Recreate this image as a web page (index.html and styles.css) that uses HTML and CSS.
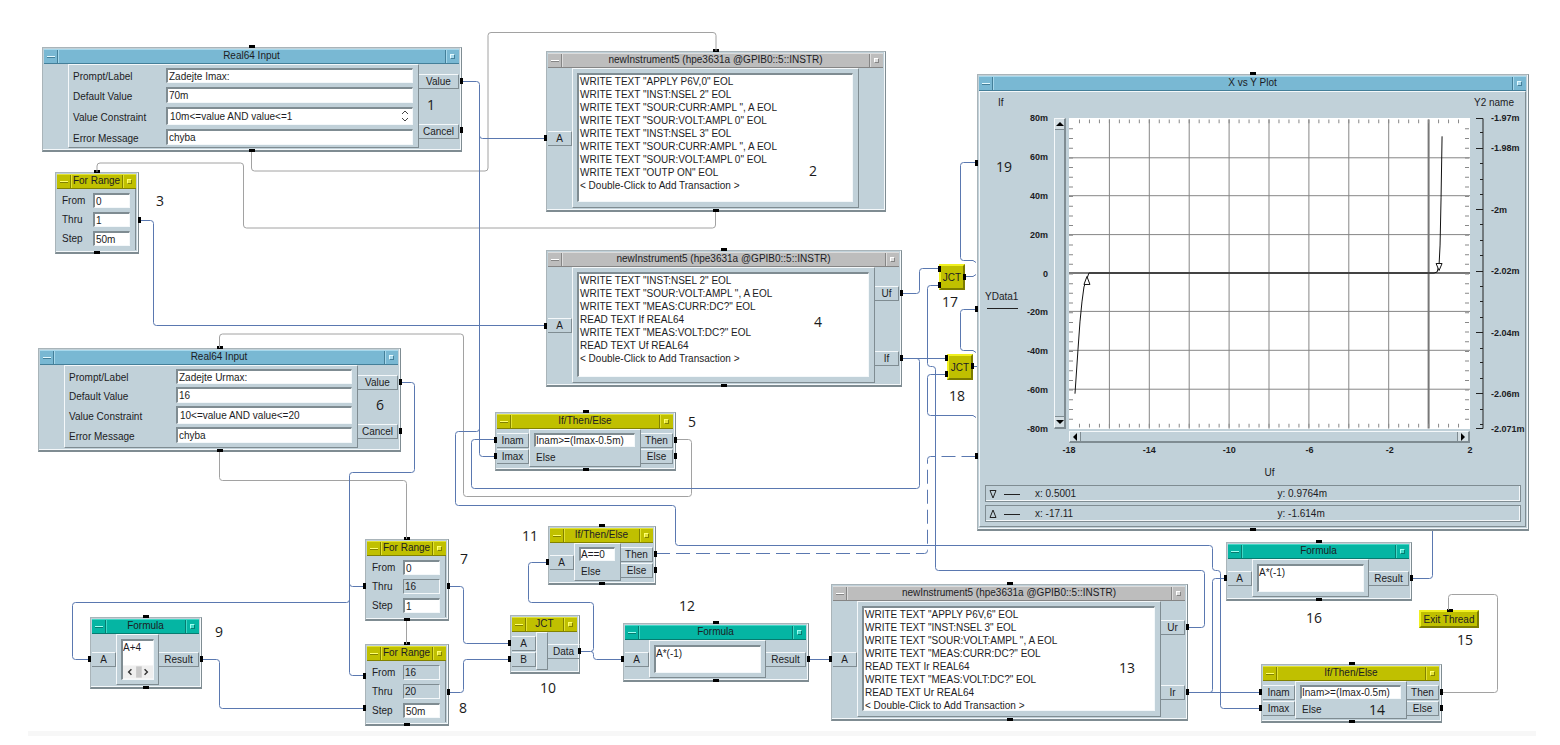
FILE: index.html
```html
<!DOCTYPE html>
<html lang="cs">
<head>
<meta charset="utf-8">
<title>VEE program</title>
<link rel="stylesheet" href="styles.css">
</head>
<body>
<main class="canvas">

<section class="node blue pins node-imax">
  <header class="title"><button class="min" aria-label="Minimize"></button><span>Real64 Input</span><button class="max" aria-label="Maximize"></button></header>
  <div class="body">
    <div class="strip narrow"></div>
    <div class="panel fields">
      <label for="i1">Prompt/Label</label><input id="i1" value="Zadejte Imax:">
      <label for="i2">Default Value</label><input id="i2" value="70m">
      <label for="i3">Value Constraint</label>
      <div class="spin"><input id="i3" value="10m&lt;=value AND value&lt;=1"><svg viewBox="0 0 10 14"><path d="M2 5l3-3 3 3M2 9l3 3 3-3"/></svg></div>
      <label for="i4">Error Message</label><input id="i4" value="chyba">
    </div>
    <div class="strip wide spread"><span class="term">Value</span><span class="term">Cancel</span></div>
  </div>
</section>

<section class="node gray pins node-setup">
  <header class="title"><button class="min" aria-label="Minimize"></button><span>newInstrument5 (hpe3631a @GPIB0::5::INSTR)</span><button class="max" aria-label="Maximize"></button></header>
  <div class="body">
    <div class="strip narrow"><span class="term">A</span></div>
    <div class="panel"><ul class="list">
      <li>WRITE TEXT "APPLY P6V,0" EOL</li><li>WRITE TEXT "INST:NSEL 2" EOL</li><li>WRITE TEXT "SOUR:CURR:AMPL ", A EOL</li><li>WRITE TEXT "SOUR:VOLT:AMPL 0" EOL</li><li>WRITE TEXT "INST:NSEL 3" EOL</li><li>WRITE TEXT "SOUR:CURR:AMPL ", A EOL</li><li>WRITE TEXT "SOUR:VOLT:AMPL 0" EOL</li><li>WRITE TEXT "OUTP ON" EOL</li><li>&lt; Double-Click to Add Transaction &gt;</li>
    </ul></div>
    <div class="strip narrow"></div>
  </div>
</section>

<section class="node yellow pins node-range-a">
  <header class="title"><button class="min" aria-label="Minimize"></button><span>For Range</span><button class="max" aria-label="Maximize"></button></header>
  <div class="range">
    <label for="a1">From</label><input id="a1" value="0">
    <label for="a2">Thru</label><input id="a2" value="1">
    <label for="a3">Step</label><input id="a3" value="50m">
  </div>
</section>

<section class="node gray pins node-forward">
  <header class="title"><button class="min" aria-label="Minimize"></button><span>newInstrument5 (hpe3631a @GPIB0::5::INSTR)</span><button class="max" aria-label="Maximize"></button></header>
  <div class="body">
    <div class="strip narrow"><span class="term">A</span></div>
    <div class="panel"><ul class="list">
      <li>WRITE TEXT "INST:NSEL 2" EOL</li><li>WRITE TEXT "SOUR:VOLT:AMPL ", A EOL</li><li>WRITE TEXT "MEAS:CURR:DC?" EOL</li><li>READ TEXT If REAL64</li><li>WRITE TEXT "MEAS:VOLT:DC?" EOL</li><li>READ TEXT Uf REAL64</li><li>&lt; Double-Click to Add Transaction &gt;</li>
    </ul></div>
    <div class="strip narrow spread"><span class="term">Uf</span><span class="term">If</span></div>
  </div>
</section>

<section class="node yellow pins node-if-forward">
  <header class="title"><button class="min" aria-label="Minimize"></button><span>If/Then/Else</span><button class="max" aria-label="Maximize"></button></header>
  <div class="body">
    <div class="strip mid"><span class="term">Inam</span><span class="term">Imax</span></div>
    <div class="panel cond"><input aria-label="Condition" value="Inam&gt;=(Imax-0.5m)"><span>Else</span></div>
    <div class="strip mid"><span class="term">Then</span><span class="term">Else</span></div>
  </div>
</section>

<section class="node blue pins node-urmax">
  <header class="title"><button class="min" aria-label="Minimize"></button><span>Real64 Input</span><button class="max" aria-label="Maximize"></button></header>
  <div class="body">
    <div class="strip narrow"></div>
    <div class="panel fields">
      <label for="u1">Prompt/Label</label><input id="u1" value="Zadejte Urmax:">
      <label for="u2">Default Value</label><input id="u2" value="16">
      <label for="u3">Value Constraint</label>
      <div class="spin"><input id="u3" value="10&lt;=value AND value&lt;=20"></div>
      <label for="u4">Error Message</label><input id="u4" value="chyba">
    </div>
    <div class="strip wide spread"><span class="term">Value</span><span class="term">Cancel</span></div>
  </div>
</section>

<section class="node yellow pins node-range-b">
  <header class="title"><button class="min" aria-label="Minimize"></button><span>For Range</span><button class="max" aria-label="Maximize"></button></header>
  <div class="range">
    <label for="b1">From</label><input id="b1" value="0">
    <label for="b2">Thru</label><input id="b2" value="16" readonly>
    <label for="b3">Step</label><input id="b3" value="1">
  </div>
</section>

<section class="node yellow pins node-range-c">
  <header class="title"><button class="min" aria-label="Minimize"></button><span>For Range</span><button class="max" aria-label="Maximize"></button></header>
  <div class="range">
    <label for="c1">From</label><input id="c1" value="16" readonly>
    <label for="c2">Thru</label><input id="c2" value="20" readonly>
    <label for="c3">Step</label><input id="c3" value="50m">
  </div>
</section>

<section class="node green pins node-plus">
  <header class="title"><button class="min" aria-label="Minimize"></button><span>Formula</span><button class="max" aria-label="Maximize"></button></header>
  <div class="body">
    <div class="strip narrow"><span class="term">A</span></div>
    <div class="panel formula"><div class="editor"><textarea aria-label="Formula">A+4</textarea>
      <svg class="hbar" viewBox="0 0 32 14"><path class="track" d="M0 0h32v14h-32z"/><path class="thumb" d="M14 1h6v12h-6z"/><path class="chev" d="M9 4l-3 3 3 3M23 4l3 3-3 3"/></svg></div></div>
    <div class="strip wide"><span class="term">Result</span></div>
  </div>
</section>

<section class="node yellow node-jct">
  <header class="title"><button class="min" aria-label="Minimize"></button><span>JCT</span><button class="max" aria-label="Maximize"></button></header>
  <div class="body">
    <div class="strip narrow"><span class="term">A</span><span class="term">B</span></div>
    <div class="panel"></div>
    <div class="strip mid"><span class="term">Data</span></div>
  </div>
</section>

<section class="node yellow pins node-if-zero">
  <header class="title"><button class="min" aria-label="Minimize"></button><span>If/Then/Else</span><button class="max" aria-label="Maximize"></button></header>
  <div class="body">
    <div class="strip narrow"><span class="term">A</span></div>
    <div class="panel cond"><input aria-label="Condition" value="A==0"><span>Else</span></div>
    <div class="strip mid"><span class="term">Then</span><span class="term">Else</span></div>
  </div>
</section>

<section class="node green pins node-neg-a">
  <header class="title"><button class="min" aria-label="Minimize"></button><span>Formula</span><button class="max" aria-label="Maximize"></button></header>
  <div class="body">
    <div class="strip narrow"><span class="term">A</span></div>
    <div class="panel formula"><div class="editor"><textarea aria-label="Formula">A*(-1)</textarea></div></div>
    <div class="strip wide"><span class="term">Result</span></div>
  </div>
</section>

<section class="node gray pins node-reverse">
  <header class="title"><button class="min" aria-label="Minimize"></button><span>newInstrument5 (hpe3631a @GPIB0::5::INSTR)</span><button class="max" aria-label="Maximize"></button></header>
  <div class="body">
    <div class="strip narrow"><span class="term">A</span></div>
    <div class="panel"><ul class="list">
      <li>WRITE TEXT "APPLY P6V,6" EOL</li><li>WRITE TEXT "INST:NSEL 3" EOL</li><li>WRITE TEXT "SOUR:VOLT:AMPL ", A EOL</li><li>WRITE TEXT "MEAS:CURR:DC?" EOL</li><li>READ TEXT Ir REAL64</li><li>WRITE TEXT "MEAS:VOLT:DC?" EOL</li><li>READ TEXT Ur REAL64</li><li>&lt; Double-Click to Add Transaction &gt;</li>
    </ul></div>
    <div class="strip narrow spread"><span class="term">Ur</span><span class="term">Ir</span></div>
  </div>
</section>

<section class="node green pins node-neg-b">
  <header class="title"><button class="min" aria-label="Minimize"></button><span>Formula</span><button class="max" aria-label="Maximize"></button></header>
  <div class="body">
    <div class="strip narrow"><span class="term">A</span></div>
    <div class="panel formula"><div class="editor"><textarea aria-label="Formula">A*(-1)</textarea></div></div>
    <div class="strip wide"><span class="term">Result</span></div>
  </div>
</section>

<section class="node yellow pins node-if-reverse">
  <header class="title"><button class="min" aria-label="Minimize"></button><span>If/Then/Else</span><button class="max" aria-label="Maximize"></button></header>
  <div class="body">
    <div class="strip mid"><span class="term">Inam</span><span class="term">Imax</span></div>
    <div class="panel cond"><input aria-label="Condition" value="Inam&gt;=(Imax-0.5m)"><span>Else</span></div>
    <div class="strip mid"><span class="term">Then</span><span class="term">Else</span></div>
  </div>
</section>

<button class="chip chip-exit">Exit Thread</button>
<button class="chip chip-a">JCT</button>
<button class="chip chip-b">JCT</button>

<section class="node blue pins node-plot">
  <header class="title"><button class="min" aria-label="Minimize"></button><span>X vs Y Plot</span><button class="max" aria-label="Maximize"></button></header>
  <div class="plot">
    <div class="names"><span>If</span><span>Y2 name</span></div>
    <div class="chart">
      <div class="trace"><span>YData1</span><i></i></div>
      <div class="ylabels"><span>80m</span><span>60m</span><span>40m</span><span>20m</span><span>0</span><span>-20m</span><span>-40m</span><span>-60m</span><span>-80m</span></div>
      <div class="vscroll"><button aria-label="Up"><svg viewBox="0 0 8 8"><path d="M0 6l4-4 4 4z"/></svg></button><button aria-label="Down"><svg viewBox="0 0 8 8"><path d="M0 2l4 4 4-4z"/></svg></button></div>
      <svg class="graph" viewBox="0 0 402 311">
        <path class="grid" d="M40.500 1v310M80.500 1v310M120.500 1v310M160.500 1v310M200.500 1v310M240.500 1v310M280.500 1v310M320.500 1v310M0 39.500h402M0 77.500h402M0 116.500h402M0 193.500h402M0 232.500h402M0 271.500h402"/>
        <path class="axis" d="M360.500 1v310M0 155h402"/>
        <path class="ticks-x" d="M10 3h390M10 308h390"/>
        <path class="ticks-y" d="M2 10v300M399 10v300"/>
        <path class="curve" d="M374 18L373 79 372 127 371 147 369 154 366 155H20L15 169 13 184 11 204 9 232 6 276"/>
        <path class="mark" d="M368 145.500h6l-3 7zM15 166.500h6l-3-8z"/>
      </svg>
      <svg class="y2" viewBox="0 0 56 311">
        <path d="M6 .5h7v310h-7M6 30.500h7M6 91.500h7M6 153.500h7M6 214.500h7M6 275.500h7M10 14.500h3M10 45.500h3M10 61.500h3M10 76.500h3M10 106.500h3M10 122.500h3M10 137.500h3M10 168.500h3M10 183.500h3M10 199.500h3M10 230.500h3M10 244.500h3M10 260.500h3M10 291.500h3M10 306.500h3"/>
        <text x="21" y="3">-1.97m</text><text x="21" y="33">-1.98m</text><text x="21" y="95">-2m</text><text x="21" y="156">-2.02m</text><text x="21" y="218">-2.04m</text><text x="21" y="279">-2.06m</text><text x="21" y="314">-2.071m</text>
      </svg>
      <div class="hscroll"><button aria-label="Left"><svg viewBox="0 0 8 8"><path d="M6 0L2 4l4 4z"/></svg></button><button aria-label="Right"><svg viewBox="0 0 8 8"><path d="M2 0l4 4-4 4z"/></svg></button></div>
      <div class="xlabels"><span>-18</span><span>-14</span><span>-10</span><span>-6</span><span>-2</span><span>2</span></div>
      <div class="xname">Uf</div>
    </div>
    <div class="markers">
      <div class="marker"><svg viewBox="0 0 32 10"><path d="M1 1.500h6L4 9zM15 5.500h16"/></svg><span>x: 0.5001</span><span>y: 0.9764m</span></div>
      <div class="marker"><svg viewBox="0 0 32 10"><path d="M1 8.500h6L4 1zM15 5.500h16"/></svg><span>x: -17.11</span><span>y: -1.614m</span></div>
    </div>
  </div>
</section>

<svg class="wires">
  <g class="seq">
    <path d="M251.500 152v16q0 3 3 3H485q3 0 3-3V35.500q0-3 3-3H713q3 0 3 3V51"/>
    <path d="M715.500 212v13q0 3-3 3H246.500q-3 0-3-3V166q0-3-3-3H100q-3 0-3 3v6"/>
    <path d="M219.500 348v-11q0-3 3-3H460.500q3 0 3 3V493.500q0 3 3 3H688.500q3 0 3-3V442.500q0-3-3-3H676"/>
    <path d="M219.500 452v25.500q0 3 3 3H403.500q3 0 3 3V539M406.500 621v23"/>
    <path d="M1442 692.500H1494.500q3 0 3-3V597.500q0-3-3-3H1451.500q-3 0-3 3V610"/>
  </g>
  <g class="data">
    <path d="M462 81.500H476.500q3 0 3 3V453.500q0 3 3 3H495M479.500 135.500q0 3 3 3H546"/>
    <path d="M479.500 428.500q0 3-3 3H458.500q-3 0-3 3V502.500q0 3 3 3H672.500q3 0 3 3V542.500q0 3 3 3H1209.500q3 0 3 3V567.500q0 3 3 3h2q3 0 3 3V705.500q0 3 3 3H1261"/>
    <path d="M139 220.500H150.500q3 0 3 3V322.500q0 3 3 3H546"/>
    <path d="M401 382.500H411.500q3 0 3 3V469.500q0 3-3 3H352.500q-3 0-3 3V672.500q0 3 3 3H365M349.500 583.500q0 3 3 3H365M349.500 599.500q0 3-3 3H75.500q-3 0-3 3V656.500q0 3 3 3H90"/>
    <path d="M202 659.500H216.500q3 0 3 3V705.500q0 3 3 3H365"/>
    <path d="M449 586.500H460.500q3 0 3 3V640.500q0 3 3 3H510M449 692.500H460.500q3 0 3-3V662.500q0-3 3-3H510"/>
    <path d="M580 651.500H590.500q3 0 3-3V605.500q0-3-3-3H531.500q-3 0-3-3V565.500q0-3 3-3H548M591 651.500q2.500 0 2.500 3v2q0 3 3 3H623M809 659.500H831"/>
    <path d="M902 293.500H916.500q3 0 3-3V271.500q0-3 3-3H939M902 358.500H947M917 358.500q2.500 0 2.500 3V485.500q0 3-3 3H474.500q-3 0-3-3V442.500q0-3 3-3H495"/>
    <path d="M939 285.500H930.500q-3 0-3 3V363.500q0 3 3 3h2q3 0 3 3V567.500q0 3 3 3H1201.500q3 0 3 3V624.500q0 3-3 3H1188"/>
    <path d="M947 374.500H930.500q-3 0-3 3V412.500q0 3 3 3H973l3 2M965 276.500h8l3-2M972 366.500h5"/>
    <path d="M977 162.500H963.500q-3 0-3 3V257.500q0 3 3 3H973l3 2M977 309.500H963.500q-3 0-3 3V347.500q0 3 3 3H973l3 2"/>
    <path d="M1188 692.500H1261M1210 692.500q2.500 0 2.500-3V581.500q0-3 3-3H1226M1412 578.500H1429.500q3 0 3-3V531"/>
    <path class="dashed" d="M656 553.500H924.500q3 0 3-3V459.500q0-3 3-3H977"/>
  </g>
  <path class="side-pins" d="M460 81h3M460 130h3M138 220h3M900 293h3M900 358h3M674 440h3M674 456h3M399 382h3M399 431h3M447 586h3M447 692h3M200 659h3M578 651h3M654 554h3M654 570h3M807 659h3M1186 627h3M1186 692h3M1410 578h3M1440 692h3M1440 708h3M963 277h3M971 366h3M544 138h3M544 326h3M494 440h3M494 456h3M363 586h3M363 676h3M363 708h3M88 659h3M508 643h3M508 659h3M546 562h3M621 659h3M829 659h3M1224 578h3M1259 692h3M1259 708h3M938 269h3M938 285h3M945 358h3M945 374h3M975 163h3M975 309h3M975 456h3"/>
  <g class="notes">
    <text x="431" y="110">1</text><text x="813" y="176">2</text><text x="160" y="206">3</text><text x="818" y="327">4</text><text x="692" y="427">5</text><text x="380" y="410">6</text><text x="464" y="564">7</text><text x="463" y="713">8</text><text x="219" y="637">9</text><text x="548" y="693">10</text><text x="530" y="541">11</text><text x="687" y="611">12</text><text x="1127" y="673">13</text><text x="1377" y="715">14</text><text x="1465" y="645">15</text><text x="1314" y="623">16</text><text x="950" y="307">17</text><text x="957" y="401">18</text><text x="1004" y="172">19</text>
  </g>
</svg>
</main>
<footer class="base"></footer>
</body>
</html>
```

FILE: styles.css
```css
:root {
  --face: #c1d1d9;
  --dark: #7f8c92;
  --light: #f4f8fa;
  --ink: #1c1c24;
}

*, *::before, *::after { box-sizing: border-box; }

body {
  margin: 0;
  min-height: 100vh;
  display: flex;
  flex-direction: column;
  background: #fff;
  color: var(--ink);
  font: 10px/13px "Liberation Sans", Arial, sans-serif;
}

input, textarea, button {
  margin: 0;
  padding: 0;
  min-width: 0;
  border: 0;
  border-radius: 0;
  color: inherit;
  font: inherit;
}

.canvas {
  position: relative;
  flex: 1;
  min-height: 731px;
}

.base {
  height: 5px;
  margin: 0 24px 9px 28px;
  background: #f7f7f7;
}

/* Nodes */
.node {
  position: absolute;
  display: flex;
  flex-direction: column;
  padding: 1px 2px 2px 1px;
  background: var(--face);
  border: 1px solid #a9b4b9;
  border-right-color: var(--dark);
  border-bottom: 2px solid var(--dark);
  box-shadow: inset -1px -1px var(--light);
}

.pins::before,
.pins::after {
  content: "";
  position: absolute;
  left: calc(50% - 3px);
  width: 6px;
  height: 3px;
  background: #000;
}
.pins::before { top: -3px; }
.pins::after { bottom: -2px; }

.title {
  display: flex;
  flex: none;
  height: 15px;
  background: var(--bar);
  border-top: 1px solid var(--bar-light);
  border-bottom: 1px solid var(--bar-dark);
  line-height: 11px;
}
.title span {
  flex: 1;
  text-align: center;
  white-space: nowrap;
}
.title button {
  flex: none;
  width: 14px;
  background: var(--bar);
  display: grid;
  place-items: center;
}
.title .min { border-right: 1px solid var(--bar-dark); box-shadow: 1px 0 var(--bar-light); }
.title .max { border-left: 1px solid var(--bar-dark); box-shadow: inset 1px 0 var(--bar-light); }
.min::before {
  content: "";
  width: 8px;
  height: 2px;
  border-top: 1px solid var(--bar-shine);
  border-bottom: 1px solid var(--bar-dark);
}
.max::before {
  content: "";
  width: 5px;
  height: 5px;
  background: var(--bar-light);
  border: 1px solid var(--bar-shine);
  border-right-color: var(--bar-dark);
  border-bottom-color: var(--bar-dark);
}

.blue { --bar: #79b8d3; --bar-light: #a6d8ec; --bar-dark: #447f99; --bar-shine: #e4faff; }
.gray { --bar: #bdbdbd; --bar-light: #dcdcdc; --bar-dark: #858585; --bar-shine: #fff; }
.yellow { --bar: #c0c000; --bar-light: #e2e234; --bar-dark: #828200; --bar-shine: #ffff70; }
.green { --bar: #05b5a3; --bar-light: #42d8c6; --bar-dark: #077b70; --bar-shine: #9dfff1; }

.body { display: flex; flex: 1; min-height: 0; }

.strip {
  flex: none;
  display: flex;
  flex-direction: column;
  justify-content: center;
  gap: 1px;
}
.narrow { width: 24px; }
.mid { width: 32px; }
.wide { width: 40px; }
.spread { justify-content: space-between; padding: 19px 0 17px; }
.wide.spread { padding: 10px 0 9px; }

.term {
  height: 15px;
  border-top: 1px solid var(--light);
  border-right: 1px solid var(--dark);
  border-bottom: 1px solid var(--dark);
  text-align: center;
}

.panel {
  flex: 1;
  min-width: 0;
  padding: 5px;
  border: 1px solid var(--light);
  border-right-color: var(--dark);
  border-bottom-color: var(--dark);
}

.list,
.editor,
.fields > input,
.spin,
.range input,
.cond input {
  background: #fff;
  border: 1px solid var(--light);
  border-top: 2px solid var(--dark);
  border-left: 2px solid var(--dark);
}

.panel:has(.list) { padding: 4px 5px 5px 4px; }
.list {
  height: 100%;
  margin: 0;
  padding: 0 1px;
  list-style: none;
}
.list li { white-space: pre; }

.fields {
  display: grid;
  grid-template-columns: 93px 1fr;
  grid-template-rows: 15px 16px 18px 16px;
  row-gap: 4px;
  padding: 3px 5px 2px 4px;
  align-items: stretch;
}
.fields label { align-self: center; padding-top: 2px; }
.fields input { padding-left: 1px; width: 100%; }
.spin { display: flex; padding: 0 2px 0 1px; }
.spin input { flex: 1; }
.spin svg { width: 10px; height: 14px; fill: none; stroke: #444; }
.node-urmax .fields { grid-template-columns: 107px 1fr; row-gap: 3px; }

.range {
  flex: 1;
  display: grid;
  grid-template-columns: 31px 1fr;
  grid-template-rows: repeat(3, 15px);
  row-gap: 4px;
  padding: 4px 5px;
  border-right: 1px solid var(--dark);
}
.range label { padding-top: 1px; }
.range input { width: 100%; padding-left: 1px; }
.range input[readonly] {
  background: var(--face);
  border-width: 1px;
}

.cond { display: flex; flex-direction: column; padding: 3px 5px 3px 4px; }
.cond input { width: 100%; height: 15px; }
.cond span { padding: 4px 2px; }

.formula { padding: 4px; }
.editor { display: flex; flex-direction: column; height: 100%; }
.editor textarea { flex: 1; resize: none; overflow: hidden; background: none; width: 100%; }
.hbar { width: 100%; height: 14px; }
.hbar .track { fill: #efefef; }
.hbar .thumb { fill: #c8c8c8; }
.hbar .chev { fill: none; stroke: #333; stroke-width: 1.5; }

/* Positions on the work area */
.node-imax { left: 42px; top: 47px; width: 420px; height: 105px; }
.node-setup { left: 546px; top: 51px; width: 340px; height: 161px; }
.node-range-a { left: 55px; top: 172px; width: 84px; height: 82px; }
.node-forward { left: 546px; top: 250px; width: 356px; height: 137px; }
.node-if-forward { left: 495px; top: 412px; width: 181px; height: 59px; }
.node-urmax { left: 38px; top: 348px; width: 363px; height: 104px; }
.node-range-b { left: 365px; top: 539px; width: 84px; height: 82px; }
.node-range-c { left: 365px; top: 644px; width: 84px; height: 82px; }
.node-plus { left: 90px; top: 617px; width: 112px; height: 72px; }
.node-jct { left: 510px; top: 615px; width: 70px; height: 59px; }
.node-if-zero { left: 548px; top: 526px; width: 108px; height: 59px; }
.node-neg-a { left: 623px; top: 623px; width: 186px; height: 59px; }
.node-reverse { left: 831px; top: 584px; width: 357px; height: 137px; }
.node-neg-b { left: 1226px; top: 542px; width: 186px; height: 59px; }
.node-if-reverse { left: 1261px; top: 664px; width: 181px; height: 59px; }
.node-plot { left: 977px; top: 74px; width: 552px; height: 457px; }

.chip {
  position: absolute;
  width: 26px;
  height: 26px;
  background: #c0c000;
  border: 2px solid #f0f020;
  border-right-color: #7c7c00;
  border-bottom-color: #7c7c00;
  white-space: nowrap;
  display: grid;
  place-items: center;
}
.chip-exit { left: 1419px; top: 610px; width: 60px; height: 18px; }
.chip-exit::before {
  content: "";
  position: absolute;
  left: 26px;
  top: -3px;
  width: 6px;
  height: 3px;
  background: #000;
}
.chip-a { left: 939px; top: 264px; }
.chip-b { left: 947px; top: 354px; }

/* Plot */
.plot {
  flex: 1;
  display: flex;
  flex-direction: column;
  border: 1px solid var(--light);
  border-right-color: var(--dark);
  border-bottom-color: var(--dark);
}
.names {
  display: flex;
  justify-content: space-between;
  height: 26px;
  padding: 4px 11px 0 18px;
}
.chart {
  display: grid;
  grid-template-columns: 40px 28px 6px 12px 3px 1fr 55px;
  grid-template-rows: 311px 2px 12px 14px 1fr;
  flex: 1;
}
.trace { grid-column: 1; padding: 172px 0 0 5px; white-space: nowrap; }
.trace i { display: block; width: 31px; margin: 5px 0 0 2px; border-top: 1px solid #222; }
.ylabels {
  grid-column: 2;
  display: flex;
  flex-direction: column;
  justify-content: space-between;
  margin: -6px 0;
  text-align: right;
  font: bold 9px/12px "Liberation Sans", Arial, sans-serif;
}
.vscroll, .hscroll {
  display: flex;
  justify-content: space-between;
  border: 1px solid var(--light);
  border-right: 2px solid var(--dark);
  border-bottom: 2px solid var(--dark);
}
.vscroll { grid-column: 4; flex-direction: column; }
.hscroll { grid-column: 6; grid-row: 3; }
.vscroll button, .hscroll button {
  display: grid;
  place-items: center;
  background: #d3dee3;
}
.vscroll button { height: 11px; border-bottom: 1px solid var(--dark); }
.vscroll button + button { border-top: 1px solid var(--dark); border-bottom: 0; }
.hscroll button { width: 11px; border-right: 1px solid var(--dark); }
.hscroll button + button { border-left: 1px solid var(--dark); border-right: 0; }
.plot button svg { width: 8px; height: 8px; }

.graph { grid-column: 6; width: 100%; height: 100%; background: #fff; fill: none; stroke-width: 1; }
.grid { stroke: #868686; }
.axis { stroke: #777; stroke-width: 2; }
.ticks-x, .ticks-y { stroke: #888; stroke-width: 4; }
.ticks-x { stroke-dasharray: 1 9; }
.ticks-y { stroke-dasharray: 1 8.7; }
.curve, .mark { stroke: #111; }
.mark { fill: #fff; }

.y2 { grid-column: 7; width: 56px; height: 311px; overflow: visible; fill: none; stroke: #222; }
.y2 text { fill: var(--ink); stroke: none; font: bold 9px "Liberation Sans", Arial, sans-serif; }

.xlabels {
  grid-column: 6;
  grid-row: 4;
  display: flex;
  justify-content: space-between;
  margin: 0 -12px;
  font: bold 9px/14px "Liberation Sans", Arial, sans-serif;
}
.xlabels span { width: 24px; text-align: center; }
.xname { grid-column: 6; grid-row: 5; padding-top: 9px; text-align: center; }

.markers { display: grid; gap: 3px; padding: 0 4px 4px 5px; }
.marker {
  display: grid;
  grid-template-columns: 46px 1fr 1fr;
  align-items: center;
  height: 17px;
  padding-left: 3px;
  border: 1px solid var(--dark);
  box-shadow: inset -1px -1px var(--light);
}
.marker svg { width: 32px; height: 10px; fill: none; stroke: #222; }

/* Wires, side pins and note numbers */
.wires {
  position: absolute;
  inset: 0;
  width: 100%;
  height: 100%;
  overflow: visible;
  pointer-events: none;
  fill: none;
}
.seq { stroke: #a2a2a2; }
.data { stroke: #5a78b0; }
.dashed { stroke-dasharray: 14 6; }
.side-pins { stroke: #000; stroke-width: 6; }
.notes {
  fill: #1a1a1a;
  text-anchor: middle;
  font: 14px "Open Sans", sans-serif;
}
```
